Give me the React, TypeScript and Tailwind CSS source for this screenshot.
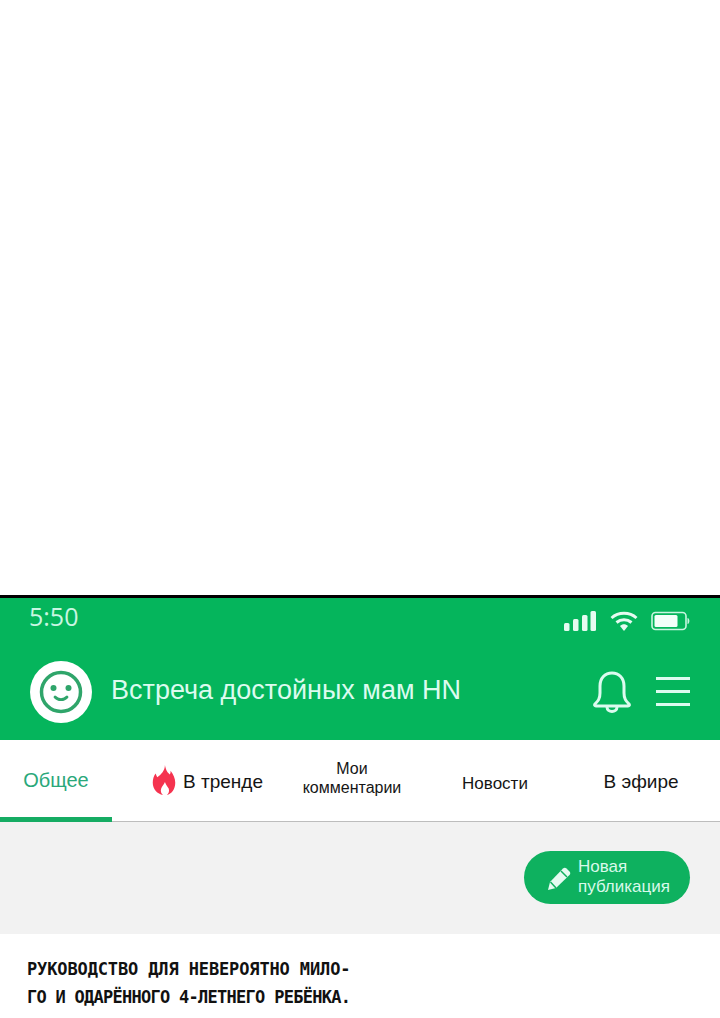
import React from 'react';

const tabs = [
  { label: 'В тренде', width: 'w-[172px]', text: 'text-[19px]' },
  { label: 'Мои комментарии', width: 'w-[136px]', text: 'text-[16px] leading-[19px] w-[110px] pb-[6px]' },
  { label: 'Новости', width: 'w-[150px]', text: 'text-[17px] pt-[7px]' },
  { label: 'В эфире', width: 'w-[142px]', text: 'text-[19px] pt-[4px]' },
];

const Flame = () => (
  <svg viewBox="0 0 24 32" className="w-[24px] h-[30px] mr-[7px] mb-[6px] -ml-[1px] shrink-0">
    <path
      fill="#f5334f"
      d="M13 0c1 5 2 7 5 10 1-1 1-2 1-4 3 4 5 8 5 13 0 7-4 12-9 13 2-2 3-4 2-7-1-2-3-4-4-7-1 3-3 4-4 7-1 3 0 5 2 7C5 31 0 26 0 19c0-4 1-7 3-10 1 2 1 3 2 4 4-3 8-7 8-13z"
    />
  </svg>
);

const Smiley = () => (
  <svg viewBox="0 0 62 62" className="w-[62px] h-[62px] shrink-0">
    <circle cx="31" cy="31" r="31" fill="#fff" />
    <circle cx="31" cy="31" r="19.5" fill="none" stroke="#2fa56a" strokeWidth="3.500" />
    <circle cx="23.500" cy="27" r="3" fill="#2fa56a" />
    <circle cx="38.500" cy="27" r="3" fill="#2fa56a" />
    <path d="M25 36c3 3.500 9 3.500 12 0" fill="none" stroke="#2fa56a" strokeWidth="2.800" strokeLinecap="round" />
  </svg>
);

const BellIcon = () => (
  <svg viewBox="0 0 38 42" className="ml-auto w-[38px] h-[42px] shrink-0" fill="none" stroke="#dcfbef" strokeWidth="3">
    <path d="M2 33c3-3 5-5 5-11v-7C7 7 12 2 19 2s12 5 12 13v7c0 6 2 8 5 11 .8 1 .3 2-1 2H3c-1.300 0-1.800-1-1-2z" strokeLinejoin="round" />
    <path d="M14 36c0 6 10 6 10 0" />
  </svg>
);

const StatusIcons = () => (
  <div className="flex items-center">
    <svg viewBox="0 0 32 20" className="w-[32px] h-[20px] text-[#e6fbf1]">
      <rect x="0" y="12" width="5.5" height="8" rx="1.5" fill="currentColor" />
      <rect x="9" y="8" width="5.5" height="12" rx="1.5" fill="currentColor" />
      <rect x="18" y="4" width="5.5" height="16" rx="1.5" fill="currentColor" />
      <rect x="26.5" y="0" width="5.5" height="20" rx="1.5" fill="currentColor" />
    </svg>
    <svg viewBox="0 0 28 20" className="w-[28px] h-[20px] ml-[14px]">
      <path d="M1.5 7C8.5 .8 19.5 .8 26.5 7" fill="none" stroke="#e6fbf1" strokeWidth="3" />
      <path d="M6.5 11.5c4.500-3.800 10.500-3.800 15 0" fill="none" stroke="#e6fbf1" strokeWidth="3" />
      <path d="M10 15c2.500-2.200 5.500-2.200 8 0l-4 5z" fill="#e6fbf1" />
    </svg>
    <svg viewBox="0 0 40 20" className="w-[40px] h-[20px] ml-[13px]">
      <rect x="1" y="1.500" width="34" height="17" rx="3.500" fill="none" stroke="#c8f5e0" strokeWidth="1.600" />
      <rect x="3.500" y="4" width="23" height="12" rx="1.500" fill="#f2fff9" />
      <path d="M36.500 7c2.500 0 2.500 6 0 6z" fill="#c8f5e0" />
    </svg>
  </div>
);

export default function App() {
  return (
    <div className="w-[720px] h-[1018px] overflow-hidden bg-white font-['Liberation_Sans',sans-serif]">
      <div className="h-[595px]" />

      {/* Header */}
      <div className="h-[145px] bg-[#05b55c] border-t-[3px] border-black">
        <div className="flex items-center justify-between pl-[29px] pr-[29px] pt-[4px] h-[42px]">
          <span className="text-[25px] text-[#c9f6e2] font-['Open_Sans',sans-serif] leading-none pb-[10px]">5:50</span>
          <StatusIcons />
        </div>
        <div className="flex items-center pl-[30px] pr-[30px] mt-[21px]">
          <Smiley />
          <span className="ml-[19px] text-[27px] leading-none text-[#dcfbef] pb-[4px]">Встреча достойных мам HN</span>
          <BellIcon />
          <div className="ml-[25px] w-[34px] flex flex-col gap-[10px] pb-[2px]">
            <div className="h-[3px] bg-[#dcfbef]" />
            <div className="h-[3px] bg-[#dcfbef]" />
            <div className="h-[3px] bg-[#dcfbef]" />
          </div>
        </div>
      </div>

      {/* Tabs */}
      <div className="flex h-[82px] border-b border-[#bdbdbd] text-[#151515]">
        <div className="w-[112px] h-[82px] shrink-0 flex items-center justify-center border-b-[5px] border-[#16ac63] text-[20px] text-[#2aa87a] pt-[2px]">
          Общее
        </div>
        <div className={`${tabs[0].width} flex items-center justify-center pl-[20px] pt-[4px]`}>
          <Flame />
          <span className={tabs[0].text}>{tabs[0].label}</span>
        </div>
        {tabs.slice(1).map((tab) => (
          <div key={tab.label} className={`${tab.width} flex items-center justify-center text-center`}>
            <span className={tab.text}>{tab.label}</span>
          </div>
        ))}
      </div>

      {/* New post */}
      <div className="h-[112px] bg-[#f2f2f2] flex justify-end items-start pt-[29px] pr-[30px]">
        <div className="w-[166px] h-[53px] rounded-full bg-[#0eb15f] flex items-center pl-[24px]">
          <svg viewBox="0 0 24 24" className="w-[24px] h-[24px] shrink-0">
            <path
              fill="#e4fbf1"
              d="M0 24l2-8L15 2.500c1-1 2.500-1 3.500 0l3 3c1 1 1 2.500 0 3.500L8 22l-8 2z"
            />
            <path d="M13 5l6 6" stroke="#0eb15f" strokeWidth="1.500" />
            <path d="M2.500 16l5.500 6" stroke="#0eb15f" strokeWidth="1.500" />
          </svg>
          <div className="ml-[6px] text-[17px] leading-[20px] text-[#d8f9ea] pb-[2px]">
            <div>Новая</div>
            <div>публикация</div>
          </div>
        </div>
      </div>

      {/* Caption */}
      <div className="pl-[27px] pt-[21px] text-[17px] leading-[28px] uppercase text-[#111] font-['DejaVu_Sans_Mono',monospace] font-bold">
        <div className="tracking-[-0.13px]">Руководство для невероятно мило-</div>
        <div className="tracking-[-0.73px]">го и одарённого 4-летнего ребёнка.</div>
      </div>
    </div>
  );
}
